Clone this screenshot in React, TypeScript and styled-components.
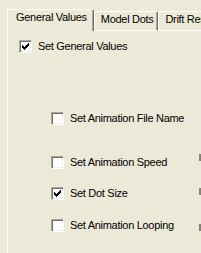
import React from 'react';
import styled, { createGlobalStyle } from 'styled-components';

const GlobalStyle = createGlobalStyle`
  html, body {
    margin: 0;
    padding: 0;
    background: #ece9d8;
  }
  body {
    font-family: "Liberation Sans", Arial, sans-serif;
  }
`;

const Window = styled.div`
  width: 201px;
  height: 253px;
  overflow: hidden;
  box-sizing: border-box;
  padding: 9px 0 0 7px;
  background: #ece9d8;
  display: flex;
  flex-direction: column;
  font-size: 11px;
  letter-spacing: -0.3px;
  color: #000;
`;

const TabStrip = styled.div`
  display: flex;
  align-items: flex-end;
  height: 22px;
  flex-shrink: 0;
`;

const Tab = styled.div<{ $active?: boolean }>`
  box-sizing: border-box;
  height: ${(p) => (p.$active ? 22 : 20)}px;
  padding: 1px ${(p) => (p.$active ? 6 : 4)}px 0 ${(p) => (p.$active ? 8 : 6)}px;
  line-height: 13px;
  white-space: nowrap;
  flex-shrink: 0;
  border-left: 1px solid #fff;
  border-top: 1px solid #fff;
  border-right: 1px solid #716f64;
  border-bottom: ${(p) => (p.$active ? 'none' : '1px solid #fff')};
  border-radius: 2px 2px 0 0;
  box-shadow: inset -1px 0 #aca899;
`;

const TabFill = styled.div`
  flex: 1;
  border-bottom: 1px solid #fff;
`;

const Panel = styled.div`
  flex: 1;
  border-left: 1px solid #fff;
  padding: 9px 0 0 11px;
  display: flex;
  flex-direction: column;
`;

const SubList = styled.div`
  display: flex;
  flex-direction: column;
  padding-left: 32px;
`;

const Row = styled.div<{ $top: number }>`
  display: flex;
  align-items: center;
  height: 13px;
  margin-top: ${(p) => p.$top}px;
`;

const Box = styled.span`
  width: 13px;
  height: 13px;
  box-sizing: border-box;
  flex-shrink: 0;
  border: 1px solid;
  border-color: #aca899 #fff #fff #aca899;
  box-shadow: inset 1px 1px #716f64, inset -1px -1px #f1efe2;
  background: #fff;
  display: flex;
  svg {
    display: block;
  }
`;

const Label = styled.span`
  margin-left: 6px;
  line-height: 13px;
  white-space: nowrap;
`;

const Knob = styled.span<{ $shift: number }>`
  width: 2px;
  height: 7px;
  margin-left: auto;
  align-self: flex-start;
  margin-top: ${(p) => p.$shift}px;
  background: #858276;
  flex-shrink: 0;
`;

// classic 7-column tick, 3px tall per column
const tick = [5, 6, 7, 6, 5, 4, 3];

const Check = ({ checked }: { checked?: boolean }) => (
  <Box>
    {checked && (
      <svg width="11" height="11" viewBox="1 1 11 11" shapeRendering="crispEdges">
        {tick.map((y, i) => (
          <rect key={i} x={3 + i} y={y} width="1" height="3" fill="#000" />
        ))}
      </svg>
    )}
  </Box>
);

const options = [
  { label: 'Set Animation File Name', top: 59, checked: false },
  { label: 'Set Animation Speed', top: 31, checked: false, knob: -2 },
  { label: 'Set Dot Size', top: 18, checked: true, knob: 1 },
  { label: 'Set Animation Looping', top: 19, checked: false, knob: 5 },
];

export default function App() {
  return (
    <Window>
      <GlobalStyle />
      <TabStrip>
        <Tab $active>General Values</Tab>
        <Tab>Model Dots</Tab>
        <Tab>Drift Results</Tab>
        <TabFill />
      </TabStrip>
      <Panel>
        <Row $top={0}>
          <Check checked />
          <Label>Set General Values</Label>
        </Row>
        <SubList>
          {options.map((o) => (
            <Row key={o.label} $top={o.top}>
              <Check checked={o.checked} />
              <Label>{o.label}</Label>
              {o.knob !== undefined && <Knob $shift={o.knob} />}
            </Row>
          ))}
        </SubList>
      </Panel>
    </Window>
  );
}
